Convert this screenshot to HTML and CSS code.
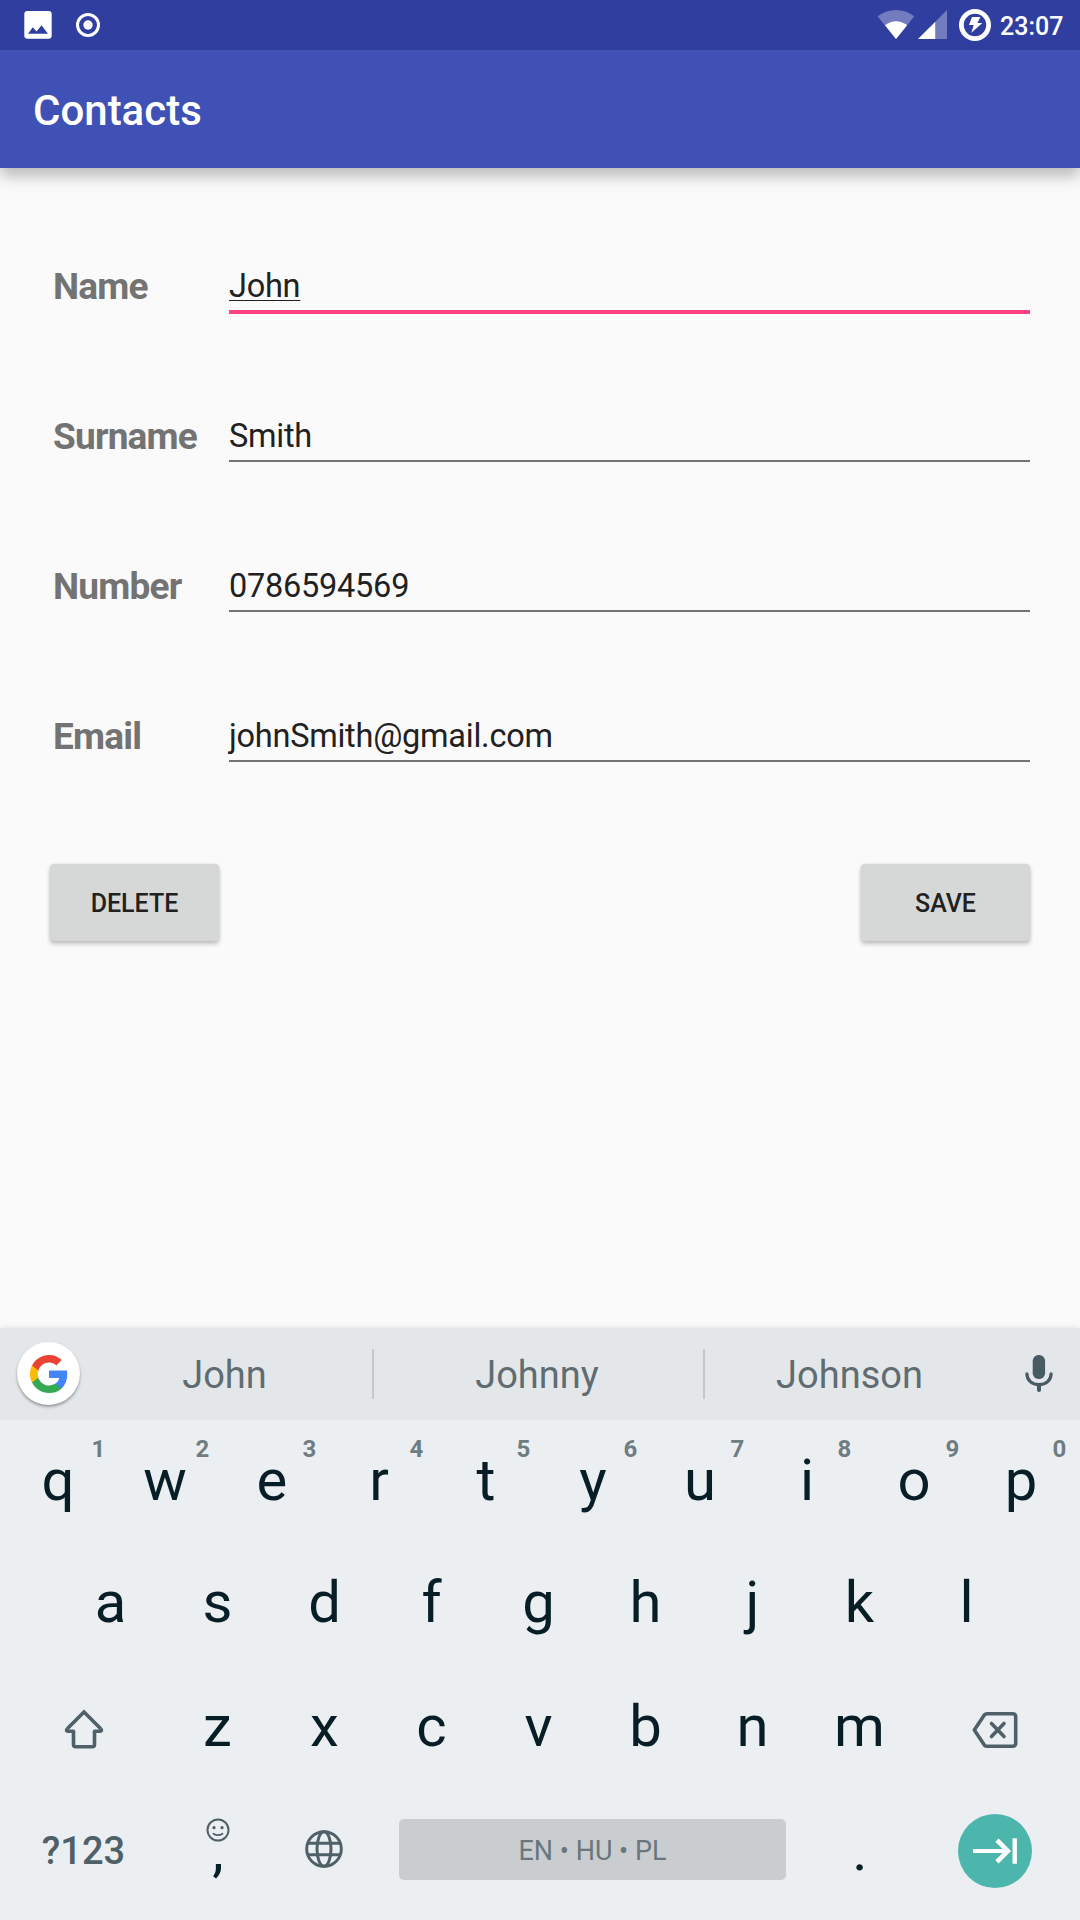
FILE: index.html
```html
<!DOCTYPE html>
<html lang="en">
<head>
<meta charset="utf-8">
<title>Contacts</title>
<link rel="stylesheet" href="styles.css">
</head>
<body>
<div class="screen">
  <header class="status-bar">
    <svg class="notif-icons" width="110" height="50" viewBox="0 0 110 50">
      <path fill="#fff" fill-rule="evenodd" d="M27.5 11h21a3.2 3.2 0 0 1 3.2 3.2v21.300a3.200 3.200 0 0 1-3.200 3.200h-21a3.200 3.200 0 0 1-3.200-3.200V14.200A3.200 3.200 0 0 1 27.500 11zM28 33.700h20L41.500 25.200l-5 6.300-3.700-4.200z"/>
      <circle cx="88" cy="25" r="10.500" fill="none" stroke="#fff" stroke-width="3"/>
      <circle cx="88" cy="25" r="4.700" fill="#fff"/>
    </svg>
    <div class="status-right">
      <svg width="120" height="50" viewBox="875 0 120 50">
        <path fill="#fff" fill-opacity=".32" d="M877.500 16.200Q896 3.600 914.300 16.200L896 39z"/>
        <path fill="#fff" d="M885 25.300Q896 17.200 907.200 25.300L896 39z"/>
        <path fill="#fff" fill-opacity=".32" d="M935.300 21.700L947 10v29h-11.700z"/>
        <path fill="#fff" d="M918 39l17.300-17.300V39z"/>
        <circle cx="975" cy="25" r="13.600" fill="none" stroke="#fff" stroke-width="4.800"/>
        <path fill="#fff" d="M972 17h8.400l-3 6h5l-11 9.700 2.300-7.700H969z"/>
      </svg>
      <span class="clock">23:07</span>
    </div>
  </header>
  <div class="app-bar"><h1 class="title">Contacts</h1></div>

  <main class="form">
    <div class="field"><span class="label">Name</span><div class="input focused"><span class="composing">John</span></div></div>
    <div class="field"><span class="label">Surname</span><div class="input">Smith</div></div>
    <div class="field"><span class="label">Number</span><div class="input">0786594569</div></div>
    <div class="field"><span class="label">Email</span><div class="input">johnSmith@gmail.com</div></div>
    <div class="actions">
      <button class="btn">DELETE</button>
      <button class="btn">SAVE</button>
    </div>
  </main>

  <section class="keyboard">
    <div class="suggestions">
      <div class="google">
        <svg width="38" height="38" viewBox="1 1 22 22">
          <path fill="#4285F4" d="M22.560 12.250c0-.78-.07-1.530-.2-2.250H12v4.260h5.920c-.26 1.370-1.040 2.530-2.210 3.310v2.770h3.570c2.080-1.920 3.280-4.740 3.280-8.090z"/>
          <path fill="#34A853" d="M12 23c2.970 0 5.460-.98 7.280-2.660l-3.570-2.770c-.98.66-2.230 1.060-3.710 1.060-2.860 0-5.290-1.930-6.160-4.530H2.180v2.840C3.990 20.530 7.700 23 12 23z"/>
          <path fill="#FBBC05" d="M5.840 14.090c-.22-.66-.35-1.360-.35-2.090s.13-1.430.35-2.090V7.070H2.180C1.430 8.550 1 10.220 1 12s.43 3.450 1.180 4.930l2.850-2.220.81-.62z"/>
          <path fill="#EA4335" d="M12 5.380c1.620 0 3.060.56 4.210 1.640l3.150-3.150C17.450 2.090 14.970 1 12 1 7.700 1 3.990 3.470 2.180 7.070l3.660 2.840c.87-2.600 3.300-4.530 6.160-4.530z"/>
        </svg>
      </div>
      <span class="word">John</span>
      <i class="divider"></i>
      <span class="word word-mid">Johnny</span>
      <i class="divider"></i>
      <span class="word word-last">Johnson</span>
      <svg class="mic" width="28" height="38" viewBox="0 0 28 38" fill="none" stroke="#485a62">
        <rect x="7.700" y="0" width="12.400" height="24" rx="5.800" fill="#485a62" stroke="none"/>
        <path stroke-width="3.200" stroke-linecap="round" d="M1.900 18.800c0 6.400 5 10.800 12.100 10.800s12.100-4.400 12.100-10.800"/>
        <path stroke-width="4" stroke-linecap="round" d="M14 30v5"/>
      </svg>
    </div>

    <div class="row row-top">
      <div class="key">q<sup class="hint">1</sup></div>
      <div class="key">w<sup class="hint">2</sup></div>
      <div class="key">e<sup class="hint">3</sup></div>
      <div class="key">r<sup class="hint">4</sup></div>
      <div class="key">t<sup class="hint">5</sup></div>
      <div class="key">y<sup class="hint">6</sup></div>
      <div class="key">u<sup class="hint">7</sup></div>
      <div class="key">i<sup class="hint">8</sup></div>
      <div class="key">o<sup class="hint">9</sup></div>
      <div class="key">p<sup class="hint">0</sup></div>
    </div>
    <div class="row">
      <div class="key">a</div><div class="key">s</div><div class="key">d</div><div class="key">f</div><div class="key">g</div><div class="key">h</div><div class="key">j</div><div class="key">k</div><div class="key">l</div>
    </div>
    <div class="row">
      <div class="key key-wide key-shift">
        <svg width="42" height="42" viewBox="0 0 42 42" fill="none" stroke="#4f6068" stroke-width="3.600" stroke-linejoin="round">
          <path stroke-linejoin="miter" d="M4.500 20.500L21 4l16.500 16.500"/>
          <path d="M4.500 20.300q-2.400 3 .8 3h5.200v13.200q0 2.200 2.200 2.200h16.600q2.200 0 2.200-2.200V23.300h5.200q3.200 0 .8-3"/>
        </svg>
      </div>
      <div class="key">z</div><div class="key">x</div><div class="key">c</div><div class="key">v</div><div class="key">b</div><div class="key">n</div><div class="key">m</div>
      <div class="key key-wide key-delete">
        <svg width="46" height="38" viewBox="0 0 46 38" fill="none" stroke="#4f6068" stroke-width="3.600" stroke-linejoin="round" stroke-linecap="round">
          <path d="M2.300 19L12.500 3.800Q13.500 2.700 15 2.700H40.500Q43.700 2.700 43.700 5.700V32.300Q43.700 35.300 40.500 35.300H15Q13.500 35.300 12.500 34.200z"/>
          <path d="M19.500 12.500L32 25.500M32 12.500L19.500 25.500"/>
        </svg>
      </div>
    </div>
    <div class="row row-bottom">
      <div class="key key-wide symbols">?123</div>
      <div class="key key-comma">
        <svg class="smiley" width="24" height="24" viewBox="0 0 24 24" fill="none" stroke="#4f6068">
          <circle cx="12" cy="12" r="10.500" stroke-width="2"/>
          <path d="M7.500 15.700q4.500 3 9 0" stroke-width="1.800" stroke-linecap="round"/>
          <circle cx="8" cy="9.700" r="1.600" fill="#4f6068" stroke="none"/><circle cx="16" cy="9.700" r="1.600" fill="#4f6068" stroke="none"/>
        </svg>
        <span class="punct">,</span>
      </div>
      <div class="key key-globe">
        <svg width="38" height="38" viewBox="0 0 38 38" fill="none" stroke="#4f6068" stroke-width="3">
          <circle cx="19" cy="19" r="17.300"/>
          <ellipse cx="19" cy="19" rx="7" ry="17.300"/>
          <path d="M3 13.300h32M3 24.700h32"/>
        </svg>
      </div>
      <div class="space">EN • HU • PL</div>
      <div class="key key-dot"><span class="punct">.</span></div>
      <div class="next">
        <svg width="74" height="74" viewBox="0 0 74 74" fill="none" stroke="#fff">
          <path stroke-width="4.200" d="M15 37h36"/>
          <path stroke-width="4.600" d="M39 26.200L49.800 37 39 47.800"/>
          <path stroke-width="4.400" d="M56.700 24.300v25.400"/>
        </svg>
      </div>
    </div>
  </section>
</div>
</body>
</html>
```
FILE: styles.css
```css
* { box-sizing: border-box; }

body {
  margin: 0;
  font-family: Roboto, sans-serif;
  background: #fafafa;
}

.screen {
  display: flex;
  flex-direction: column;
  width: 1080px;
  height: 1920px;
  overflow: hidden;
}

svg { display: block; flex: none; }

/* Status bar and app bar */
.status-bar {
  display: flex;
  justify-content: space-between;
  flex: none;
  height: 50px;
  background: #303f9f;
}

.status-right {
  display: flex;
  align-items: center;
  width: 205px;
}

.clock {
  padding: 3px 0 0 5px;
  color: #fff;
  font-size: 25px;
  font-weight: 500;
  line-height: 30px;
}

.app-bar {
  display: flex;
  align-items: center;
  flex: none;
  height: 118px;
  padding: 4px 0 0 33px;
  background: #3f51b5;
  box-shadow: 0 8px 14px rgba(0, 0, 0, .26);
}

.title {
  margin: 0;
  color: #fff;
  font-size: 42px;
  font-weight: 500;
  line-height: 50px;
}

/* Contact form */
.form {
  flex: 1;
  padding: 43px 50px 0 53px;
}

.field {
  display: flex;
  align-items: center;
  height: 150px;
}

.label {
  width: 176px;
  padding-top: 1px;
  color: #737373;
  font-size: 37px;
  font-weight: 700;
  letter-spacing: -.8px;
}

.input {
  flex: 1;
  height: 53px;
  margin-bottom: 2px;
  padding-top: 3px;
  border-bottom: 2px solid #737373;
  color: #212121;
  font-size: 32.500px;
  letter-spacing: -.25px;
  line-height: 49px;
}

.input.focused {
  height: 55px;
  margin-bottom: 0;
  border-bottom: 4px solid #ff4081;
}

.composing {
  text-decoration: underline;
  text-decoration-thickness: 1px;
  text-decoration-skip-ink: none;
  text-underline-offset: 3px;
}

.actions {
  display: flex;
  justify-content: space-between;
  margin: 53px 0 0 -3px;
}

.btn {
  width: 169px;
  height: 77px;
  padding: 2px 0 0;
  border: 0;
  border-radius: 4px;
  background: #d6d8d7;
  box-shadow: 0 3px 4px rgba(0, 0, 0, .22), 0 0 3px rgba(0, 0, 0, .1);
  color: #212121;
  font: 500 25px Roboto, sans-serif;
}

/* Keyboard */
.keyboard {
  flex: none;
  height: 592px;
  background: #eceff1;
  box-shadow: 0 0 5px rgba(0, 0, 0, .12);
}

.suggestions {
  display: flex;
  align-items: center;
  height: 92px;
  padding-left: 17px;
  background: #e4e7e9;
}

.google {
  display: flex;
  align-items: center;
  justify-content: center;
  width: 63px;
  height: 63px;
  margin-bottom: 1px;
  border-radius: 50%;
  background: #fff;
  box-shadow: 0 2px 3px rgba(0, 0, 0, .35);
}

.word {
  width: 292px;
  padding: 2px 3px 0 0;
  color: #5f6c72;
  font-size: 38px;
  line-height: 44px;
  text-align: center;
}

.word-mid { width: 329px; }
.word-last { width: 289px; padding-right: 0; }

.divider {
  width: 2px;
  height: 50px;
  background: #c4c8ca;
}

.mic { margin-left: 31px; }

.row {
  display: flex;
  align-items: center;
  justify-content: center;
  height: 124px;
  padding-right: 3px;
}

.row-top { height: 120px; padding-right: 1px; }

.key {
  position: relative;
  display: flex;
  align-items: center;
  justify-content: center;
  width: 107px;
  height: 100%;
  color: #071e27;
  font-size: 58px;
}

.hint {
  position: absolute;
  top: 14px;
  left: 84px;
  color: #6f7d83;
  font-size: 24px;
  font-weight: 700;
  line-height: 30px;
}

.key:first-child .hint { left: 87px; }
.key:nth-last-child(-n+2) .hint { left: 85px; }

.key-wide { width: 160px; }
.key-shift { padding-top: 5px; }
.key-delete { padding: 8px 0 0 3px; }

.key-comma {
  flex-direction: column;
  justify-content: flex-start;
  padding-top: 30px;
}

.punct { line-height: 68px; }
.key-comma .punct { margin: -26px 0 0 1px; }
.key-globe { padding: 0 2px 2px 0; }
.key-dot { width: 148px; }

.symbols {
  padding: 2px 1px 0 0;
  color: #4f6068;
  font-size: 38px;
  font-weight: 500;
}

.row-bottom { justify-content: flex-start; padding: 0 0 0 4px; }

.space {
  width: 387px;
  height: 61px;
  margin: 0 0 1px 21px;
  border-radius: 5px;
  background: #c9cdd0;
  color: #69767c;
  font-size: 27px;
  line-height: 64px;
  text-align: center;
}

.next {
  width: 74px;
  height: 74px;
  margin: 2px 0 0 24px;
  border-radius: 50%;
  background: #4db6ac;
}
```
